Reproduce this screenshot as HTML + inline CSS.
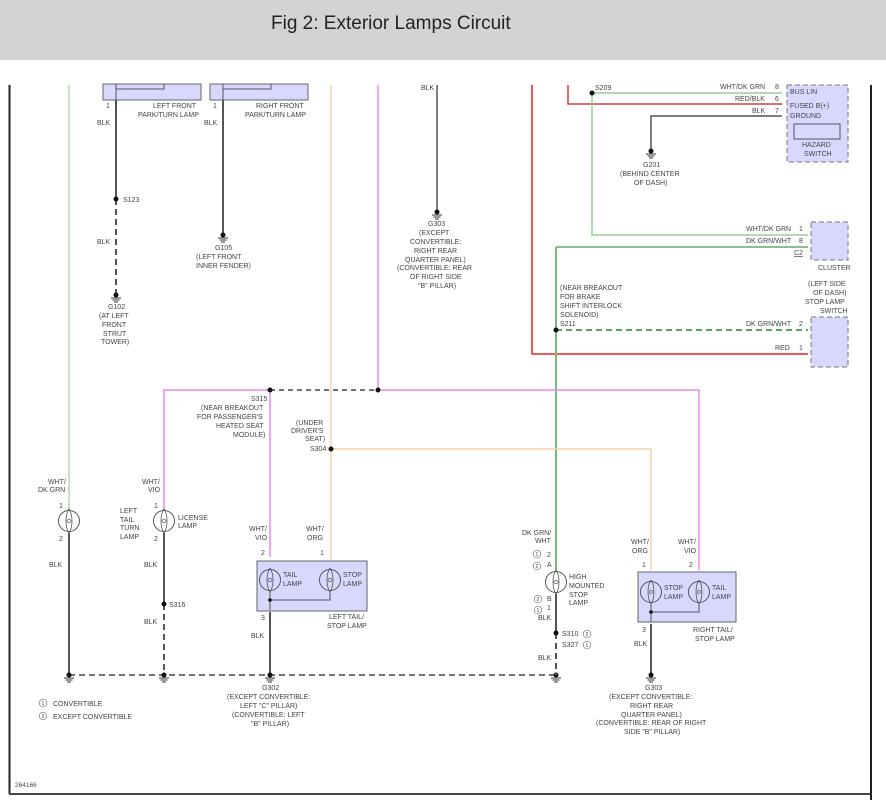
<!DOCTYPE html>
<html><head><meta charset="utf-8"><style>
body{margin:0;width:886px;height:809px;background:#fff;overflow:hidden;font-family:"Liberation Sans",sans-serif}
.hdr{position:absolute;left:0;top:0;width:886px;height:60px;background:#d3d3d3}
.hdr span{position:absolute;left:271px;top:13px;font-size:19px;color:#222;font-family:"Liberation Sans",sans-serif}
svg{position:absolute;left:0;top:0}
text{font-family:"Liberation Sans",sans-serif;font-size:7px;fill:#444}
.cn{font-size:5px}
</style></head><body>
<div class="hdr"><span>Fig 2: Exterior Lamps Circuit</span></div>
<svg width="886" height="809" viewBox="0 0 886 809">
<defs>
<g id="gnd"><circle cx="0" cy="0" r="2.5" fill="#111"/><line x1="-5" y1="3" x2="5" y2="3" stroke="#333"/><line x1="-3.5" y1="5" x2="3.5" y2="5" stroke="#333"/><line x1="-2" y1="7" x2="2" y2="7" stroke="#333"/></g>
<g id="lamp"><circle r="10.5" fill="none" stroke="#555" stroke-width="1"/><path d="M0,-12 C-4,-6 -4,6 0,12 M0,-12 C4,-6 4,6 0,12" fill="none" stroke="#555" stroke-width="0.8"/><ellipse rx="2" ry="1.5" fill="none" stroke="#555" stroke-width="0.7"/></g>
</defs>
<line x1="9.5" y1="85" x2="9.5" y2="794" stroke="#222" stroke-width="2"/>
<line x1="9" y1="794" x2="872" y2="794" stroke="#444" stroke-width="2"/>
<line x1="871" y1="85" x2="871" y2="800" stroke="#222" stroke-width="2"/>
<line x1="69" y1="85" x2="69" y2="510" stroke="#8bc48b"/>
<use href="#lamp" x="69" y="521"/>
<line x1="69" y1="533" x2="69" y2="675" stroke="#555" stroke-width="2"/>
<rect x="103" y="84" width="98" height="16" fill="#d8d8ff" stroke="#666"/>
<rect x="210" y="84" width="98" height="16" fill="#d8d8ff" stroke="#666"/>
<path d="M116,84 V100 M116,89 H164 V84 M223,84 V100 M223,89 H271 V84" stroke="#555" fill="none"/>
<line x1="116" y1="100" x2="116" y2="199" stroke="#555" stroke-width="2"/>
<line x1="116" y1="199" x2="116" y2="295" stroke="#555" stroke-width="2" stroke-dasharray="6,4"/>
<circle cx="116" cy="199" r="2.5" fill="#111"/>
<use href="#gnd" x="116" y="295"/>
<line x1="223" y1="100" x2="223" y2="235" stroke="#555" stroke-width="2"/>
<use href="#gnd" x="223" y="235"/>
<text x="106" y="108">1</text><text x="213" y="108">1</text>
<text x="153" y="108">LEFT FRONT</text><text x="138" y="117">PARK/TURN LAMP</text>
<text x="256" y="108">RIGHT FRONT</text><text x="245" y="117">PARK/TURN LAMP</text>
<text x="97" y="125">BLK</text><text x="204" y="125">BLK</text>
<text x="123" y="202">S123</text><text x="97" y="244">BLK</text>
<text x="108" y="309">G102</text><text x="99" y="318">(AT LEFT</text><text x="102" y="327">FRONT</text><text x="103" y="336">STRUT</text><text x="101" y="344">TOWER)</text>
<text x="215" y="250">G105</text><text x="196" y="259">(LEFT FRONT</text><text x="196" y="268">INNER FENDER)</text>
<line x1="331" y1="85" x2="331" y2="560" stroke="#f3d3b0" stroke-width="1.5"/>
<line x1="378" y1="85" x2="378" y2="390" stroke="#ee88ee" stroke-width="1.5"/>
<line x1="437" y1="85" x2="437" y2="212" stroke="#555" stroke-width="1.5"/>
<use href="#gnd" x="437" y="212"/>
<text x="421" y="90">BLK</text>
<text x="428" y="226">G303</text><text x="419" y="235">(EXCEPT</text><text x="410" y="244">CONVERTIBLE:</text><text x="414" y="253">RIGHT REAR</text><text x="405" y="262">QUARTER PANEL)</text><text x="397" y="270">(CONVERTIBLE: REAR</text><text x="410" y="279">OF RIGHT SIDE</text><text x="418" y="288">"B" PILLAR)</text>
<path d="M532,85 V354 H808" stroke="#ee2222" stroke-width="1.5" fill="none"/>
<path d="M568,85 V104 H782" stroke="#d04040" stroke-width="1.5" fill="none"/>
<path d="M592,93 H782 M592,93 V235 H808" stroke="#9ccc9c" stroke-width="1.5" fill="none"/>
<circle cx="592" cy="93" r="2.5" fill="#111"/>
<text x="595" y="90">S209</text>
<path d="M782,116 H651 V150" stroke="#555" stroke-width="1.5" fill="none"/>
<use href="#gnd" x="651" y="151"/>
<text x="720" y="89">WHT/DK GRN</text><text x="775" y="89">8</text>
<text x="735" y="101">RED/BLK</text><text x="775" y="101">6</text>
<text x="752" y="113">BLK</text><text x="775" y="113">7</text>
<text x="643" y="167">G201</text><text x="620" y="176">(BEHIND CENTER</text><text x="634" y="185">OF DASH)</text>
<rect x="787" y="85" width="61" height="77" fill="#d8d8ff" stroke="#777" stroke-dasharray="5,3"/>
<rect x="794" y="124" width="46" height="15" fill="#d8d8ff" stroke="#555"/>
<text x="790" y="94">BUS LIN</text><text x="790" y="108">FUSED B(+)</text><text x="790" y="118">GROUND</text>
<text x="802" y="147">HAZARD</text><text x="804" y="156">SWITCH</text>
<rect x="811" y="222" width="37" height="38" fill="#d8d8ff" stroke="#777" stroke-dasharray="5,3"/>
<path d="M556,247 H808" stroke="#66aa66" stroke-width="1.5"/>
<text x="746" y="231">WHT/DK GRN</text><text x="799" y="231">1</text>
<text x="746" y="243">DK GRN/WHT</text><text x="799" y="243">8</text>
<text x="794" y="255" text-decoration="underline">C2</text>
<text x="818" y="270">CLUSTER</text>
<text x="808" y="286">(LEFT SIDE</text><text x="813" y="295">OF DASH)</text><text x="805" y="304">STOP LAMP</text><text x="820" y="313">SWITCH</text>
<rect x="811" y="317" width="37" height="50" fill="#d8d8ff" stroke="#777" stroke-dasharray="5,3"/>
<line x1="556" y1="330" x2="808" y2="330" stroke="#228822" stroke-width="1.5" stroke-dasharray="6,4"/>
<text x="746" y="326">DK GRN/WHT</text><text x="799" y="326">2</text>
<text x="775" y="350">RED</text><text x="799" y="350">1</text>
<text x="560" y="290">(NEAR BREAKOUT</text><text x="560" y="299">FOR BRAKE</text><text x="560" y="308">SHIFT INTERLOCK</text><text x="560" y="317">SOLENOID)</text><text x="560" y="326">S211</text>
<line x1="556" y1="247" x2="556" y2="570" stroke="#77bb77" stroke-width="2"/>
<circle cx="556" cy="330" r="2.5" fill="#111"/>
<path d="M164,510 V390 H270" stroke="#ee88ee" stroke-width="1.5" fill="none"/>
<path d="M378,390 H699 V570" stroke="#ee88ee" stroke-width="1.5" fill="none"/>
<line x1="270" y1="390" x2="378" y2="390" stroke="#444" stroke-width="1.5" stroke-dasharray="5,4"/>
<line x1="270" y1="390" x2="270" y2="557" stroke="#ee88ee" stroke-width="1.5"/>
<circle cx="270" cy="390" r="2.5" fill="#111"/><circle cx="378" cy="390" r="2.5" fill="#111"/>
<text x="251" y="401">S315</text><text x="201" y="410">(NEAR BREAKOUT</text><text x="197" y="419">FOR PASSENGER'S</text><text x="216" y="428">HEATED SEAT</text><text x="233" y="437">MODULE)</text>
<path d="M331,449 H651 V570" stroke="#f3d3b0" stroke-width="1.5" fill="none"/>
<circle cx="331" cy="449" r="2.5" fill="#111"/>
<text x="296" y="425">(UNDER</text><text x="291" y="433">DRIVER'S</text><text x="305" y="441">SEAT)</text><text x="310" y="451">S304</text>
<text x="48" y="484">WHT/</text><text x="38" y="492">DK GRN</text>
<text x="59" y="508">1</text><text x="59" y="541">2</text>
<text x="49" y="567">BLK</text>
<text x="142" y="484">WHT/</text><text x="148" y="492">VIO</text>
<text x="154" y="508">1</text><text x="154" y="541">2</text>
<text x="120" y="513">LEFT</text><text x="120" y="522">TAIL</text><text x="120" y="530">TURN</text><text x="120" y="539">LAMP</text>
<use href="#lamp" x="164" y="521"/>
<text x="178" y="520">LICENSE</text><text x="178" y="528">LAMP</text>
<line x1="164" y1="533" x2="164" y2="604" stroke="#555" stroke-width="2"/>
<line x1="164" y1="604" x2="164" y2="675" stroke="#555" stroke-width="2" stroke-dasharray="6,4"/>
<circle cx="164" cy="604" r="2.5" fill="#111"/>
<text x="144" y="567">BLK</text><text x="169" y="607">S316</text><text x="144" y="624">BLK</text>
<rect x="257" y="561" width="110" height="50" fill="#d8d8ff" stroke="#666"/>
<use href="#lamp" x="270" y="580"/><use href="#lamp" x="330" y="580"/>
<path d="M270,592 V610 M270,600 H330 V592" stroke="#555" fill="none"/>
<circle cx="270" cy="600" r="1.8" fill="#111"/>
<text x="283" y="577">TAIL</text><text x="283" y="586">LAMP</text>
<text x="343" y="577">STOP</text><text x="343" y="586">LAMP</text>
<text x="249" y="531">WHT/</text><text x="255" y="540">VIO</text><text x="306" y="531">WHT/</text><text x="307" y="540">ORG</text>
<text x="261" y="555">2</text><text x="320" y="555">1</text><text x="261" y="620">3</text>
<text x="329" y="619">LEFT TAIL/</text><text x="327" y="628">STOP LAMP</text>
<line x1="270" y1="612" x2="270" y2="675" stroke="#555" stroke-width="2"/>
<text x="251" y="638">BLK</text>
<line x1="69" y1="675" x2="556" y2="675" stroke="#444" stroke-width="1.5" stroke-dasharray="6,4"/>
<use href="#gnd" x="69" y="675"/><use href="#gnd" x="164" y="675"/><use href="#gnd" x="270" y="675"/><use href="#gnd" x="556" y="675"/>
<text x="262" y="690">G302</text><text x="227" y="699">(EXCEPT CONVERTIBLE:</text><text x="240" y="708">LEFT "C" PILLAR)</text><text x="232" y="717">(CONVERTIBLE: LEFT</text><text x="251" y="726">"B" PILLAR)</text>
<circle cx="43" cy="703" r="3.8" fill="none" stroke="#777" stroke-width="0.7"/><text x="41.5" y="705" class="cn">1</text><text x="53" y="706">CONVERTIBLE</text>
<circle cx="43" cy="716" r="3.8" fill="none" stroke="#777" stroke-width="0.7"/><text x="41.5" y="718" class="cn">2</text><text x="53" y="719">EXCEPT CONVERTIBLE</text>
<text x="15" y="787" style="font-size:6.5px">264166</text>
<text x="522" y="535">DK GRN/</text><text x="535" y="543">WHT</text>
<circle cx="537" cy="554" r="3.8" fill="none" stroke="#777" stroke-width="0.7"/><text x="535.5" y="556" class="cn">1</text><text x="547" y="557">2</text>
<circle cx="537" cy="566" r="3.8" fill="none" stroke="#777" stroke-width="0.7"/><text x="535.5" y="568" class="cn">2</text><text x="547" y="567">A</text>
<use href="#lamp" x="556" y="582"/>
<text x="569" y="579">HIGH</text><text x="569" y="588">MOUNTED</text><text x="569" y="597">STOP</text><text x="569" y="605">LAMP</text>
<circle cx="538" cy="599" r="3.8" fill="none" stroke="#777" stroke-width="0.7"/><text x="536.5" y="601" class="cn">2</text><text x="547" y="601">B</text>
<circle cx="538" cy="610" r="3.8" fill="none" stroke="#777" stroke-width="0.7"/><text x="536.5" y="612" class="cn">1</text><text x="547" y="610">1</text>
<text x="538" y="620">BLK</text>
<line x1="556" y1="594" x2="556" y2="633" stroke="#555" stroke-width="2"/>
<line x1="556" y1="633" x2="556" y2="675" stroke="#555" stroke-width="2" stroke-dasharray="6,4"/>
<circle cx="556" cy="633" r="2.5" fill="#111"/>
<text x="562" y="636">S310</text><circle cx="587" cy="634" r="3.8" fill="none" stroke="#777" stroke-width="0.7"/><text x="585.5" y="636" class="cn">2</text>
<text x="562" y="647">S327</text><circle cx="587" cy="645" r="3.8" fill="none" stroke="#777" stroke-width="0.7"/><text x="585.5" y="647" class="cn">1</text>
<text x="538" y="660">BLK</text>
<rect x="638" y="572" width="98" height="50" fill="#d8d8ff" stroke="#666"/>
<use href="#lamp" x="651" y="592"/><use href="#lamp" x="699" y="592"/>
<path d="M651,604 V622 M651,612 H699 V604" stroke="#555" fill="none"/>
<circle cx="651" cy="612" r="1.8" fill="#111"/>
<text x="664" y="590">STOP</text><text x="664" y="599">LAMP</text>
<text x="712" y="590">TAIL</text><text x="712" y="599">LAMP</text>
<text x="631" y="544">WHT/</text><text x="632" y="553">ORG</text><text x="678" y="544">WHT/</text><text x="684" y="553">VIO</text>
<text x="642" y="567">1</text><text x="689" y="567">2</text><text x="642" y="632">3</text>
<text x="693" y="632">RIGHT TAIL/</text><text x="695" y="641">STOP LAMP</text>
<line x1="651" y1="624" x2="651" y2="675" stroke="#555" stroke-width="2"/>
<use href="#gnd" x="651" y="675"/>
<text x="634" y="646">BLK</text>
<text x="645" y="690">G303</text><text x="609" y="699">(EXCEPT CONVERTIBLE:</text><text x="630" y="708">RIGHT REAR</text><text x="621" y="717">QUARTER PANEL)</text><text x="596" y="725">(CONVERTIBLE: REAR OF RIGHT</text><text x="624" y="734">SIDE "B" PILLAR)</text>
</svg>
</body></html>
